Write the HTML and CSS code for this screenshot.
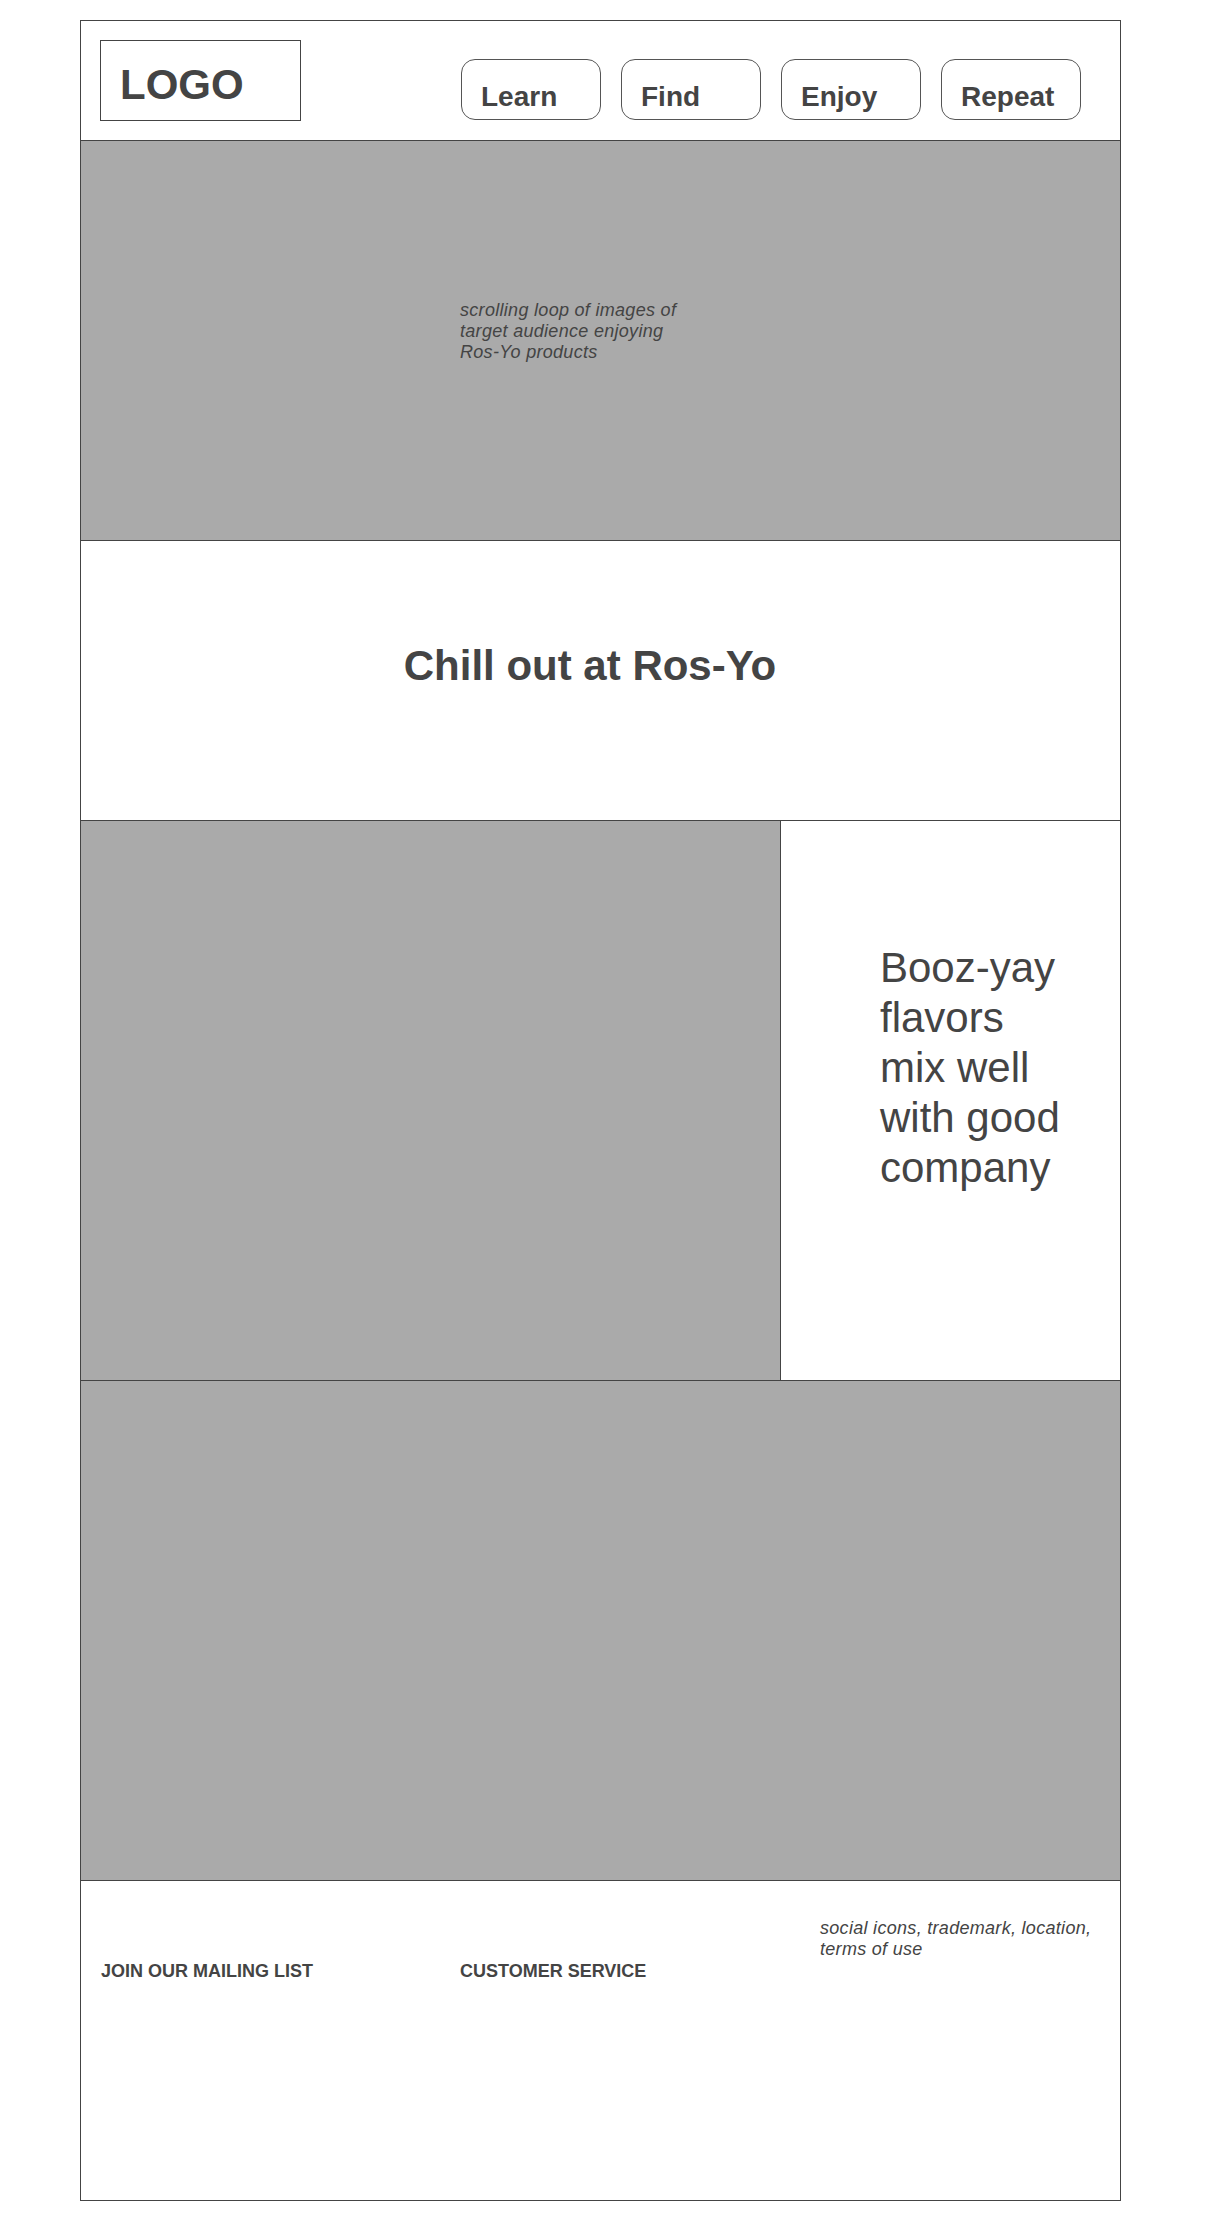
FILE: index.html
```html
<!DOCTYPE html>
<html lang="en">
<head>
  <meta charset="UTF-8" />
  <meta name="viewport" content="width=device-width, initial-scale=1.0" />
  <title>Ros-Yo Wireframe</title>
  <link rel="stylesheet" href="styles.css">
</head>
<body>

  <div class="page">

    <div class="header">
      <div class="logo">LOGO</div>
      <div class="nav">
        <div class="nav-btn">Learn</div>
        <div class="nav-btn">Find</div>
        <div class="nav-btn">Enjoy</div>
        <div class="nav-btn">Repeat</div>
      </div>
    </div>

    <div class="hero">
      <p class="note">scrolling loop of images of target audience enjoying Ros-Yo products</p>
    </div>

    <div class="tagline">
      <h1>Chill out at Ros-Yo</h1>
    </div>

    <div class="feature">
      <div class="feature-img"></div>
      <div class="feature-text">
        <p>Booz-yay<br>flavors<br>mix well<br>with good<br>company</p>
      </div>
    </div>

    <div class="banner"></div>

    <div class="footer">
      <div class="footer-col">
        <h3>JOIN OUR MAILING LIST</h3>
      </div>
      <div class="footer-col">
        <h3>CUSTOMER SERVICE</h3>
      </div>
      <div class="footer-col footer-info">
        <p class="note">social icons, trademark, location, terms of use</p>
      </div>
    </div>

  </div>

</body>
</html>
```

FILE: styles.css
```css
body {
  margin: 0;
  font-family: 'Liberation Sans', Arial, sans-serif;
  background: #fff;
  color: #444;
}
.page {
  width: 1041px;
  margin: 20px 0 18px 80px;
  border: 1px solid #444;
  box-sizing: border-box;
}
.header, .hero, .tagline, .feature, .banner {
  border-bottom: 1px solid #444;
  box-sizing: border-box;
}
.header {
  display: flex;
  justify-content: space-between;
  height: 120px;
  padding: 19px 39px 20px 19px;
}
.logo {
  width: 201px;
  height: 81px;
  box-sizing: border-box;
  border: 1px solid #444;
  padding: 20px 0 0 19px;
  font-size: 42px;
  font-weight: bold;
}
.nav {
  display: flex;
  align-self: flex-end;
  gap: 20px;
}
.nav-btn {
  width: 140px;
  height: 61px;
  box-sizing: border-box;
  border: 1px solid #555;
  border-radius: 14px;
  padding: 21px 0 0 19px;
  font-size: 28px;
  font-weight: bold;
}
.note {
  margin: 0;
  font-size: 18px;
  font-style: italic;
  letter-spacing: 0.3px;
  line-height: 21px;
}
.hero {
  height: 400px;
  background: #aaa;
  padding: 159px 0 0 379px;
}
.hero .note {
  width: 235px;
}
.tagline {
  height: 280px;
  padding: 101px 21px 0 0;
  text-align: center;
}
.tagline h1 {
  margin: 0;
  font-size: 42px;
  font-weight: bold;
}
.feature {
  display: flex;
  height: 560px;
}
.feature-img {
  width: 700px;
  background: #aaa;
  border-right: 1px solid #444;
  box-sizing: border-box;
}
.feature-text {
  padding: 122px 0 0 99px;
}
.feature-text p {
  margin: 0;
  font-size: 42px;
  line-height: 50px;
}
.banner {
  height: 500px;
  background: #aaa;
}
.footer {
  display: grid;
  grid-template-columns: 359px 360px 1fr;
  height: 319px;
  box-sizing: border-box;
  padding: 37px 20px 0 20px;
}
.footer-col h3 {
  margin: 43px 0 0;
  font-size: 18px;
  line-height: 21px;
  font-weight: bold;
}
```
